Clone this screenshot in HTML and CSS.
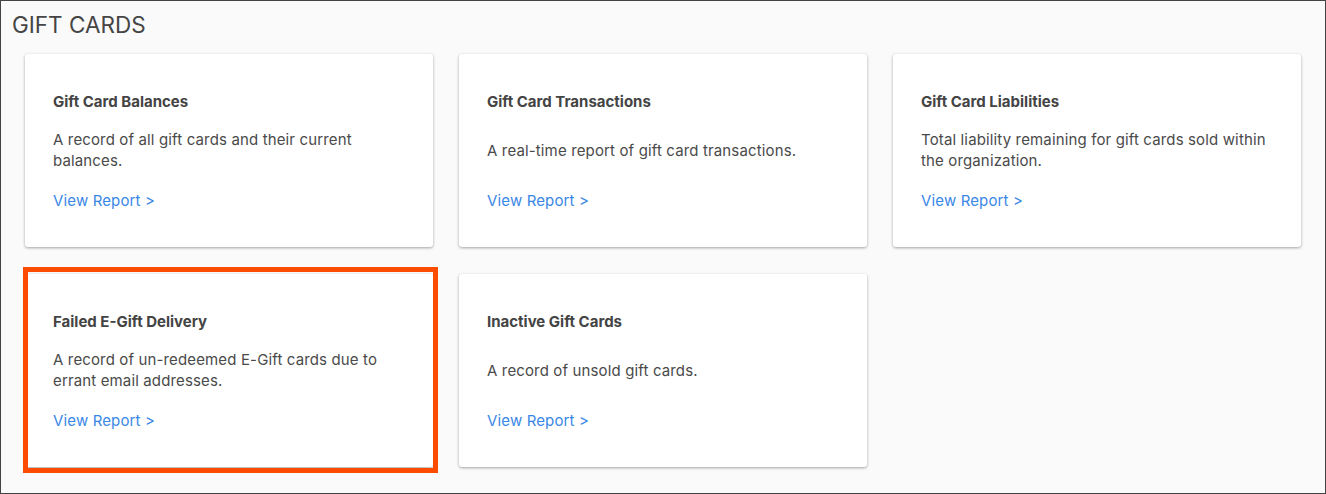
FILE: index.html
```html
<!DOCTYPE html>
<html>
<head>
<meta charset="utf-8">
<link rel="stylesheet" href="styles.css">
</head>
<body>
<div class="frame">
  <h1 class="page-title">GIFT CARDS</h1>
  <div class="grid">
    <div class="card">
      <div class="card-title">Gift Card Balances</div>
      <div class="card-desc"><p>A record of all gift cards and their current balances.</p></div>
      <a class="card-link" href="#">View Report &gt;</a>
    </div>
    <div class="card">
      <div class="card-title">Gift Card Transactions</div>
      <div class="card-desc"><p>A real-time report of gift card transactions.</p></div>
      <a class="card-link" href="#">View Report &gt;</a>
    </div>
    <div class="card">
      <div class="card-title">Gift Card Liabilities</div>
      <div class="card-desc"><p>Total liability remaining for gift cards sold within the organization.</p></div>
      <a class="card-link" href="#">View Report &gt;</a>
    </div>
    <div class="card highlighted">
      <div class="card-title">Failed E-Gift Delivery</div>
      <div class="card-desc"><p>A record of un-redeemed E-Gift cards due to errant email addresses.</p></div>
      <a class="card-link" href="#">View Report &gt;</a>
      <div class="highlight-box"></div>
    </div>
    <div class="card">
      <div class="card-title">Inactive Gift Cards</div>
      <div class="card-desc"><p>A record of unsold gift cards.</p></div>
      <a class="card-link" href="#">View Report &gt;</a>
    </div>
  </div>
</div>
</body>
</html>
```

FILE: styles.css
```css
html, body {
  margin: 0;
  padding: 0;
}
body {
  font-family: "Inter", "Noto Sans", sans-serif;
  color: #4a4a4a;
}
.frame {
  width: 1326px;
  height: 494px;
  box-sizing: border-box;
  border: 1px solid #444;
  background: #fafafa;
}
.page-title {
  margin: 0;
  padding: 10px 11px 0;
  font-size: 22.5px;
  line-height: 28px;
  font-weight: 400;
  color: #454545;
}
.grid {
  display: grid;
  grid-template-columns: repeat(3, 408px);
  column-gap: 26px;
  row-gap: 27px;
  padding: 15px 24px 0;
}
.card {
  position: relative;
  height: 193px;
  box-sizing: border-box;
  padding: 37px 28px 36px;
  background: #fff;
  border-radius: 3px;
  box-shadow: 0 1px 3px rgba(0, 0, 0, 0.35);
  display: flex;
  flex-direction: column;
}
.card-title {
  font-size: 15px;
  line-height: 21px;
  font-weight: 700;
  color: #444;
}
.card-desc {
  flex: 1;
  display: flex;
  align-items: center;
  padding-bottom: 2px;
}
.card-desc p {
  margin: 0;
  font-size: 15px;
  line-height: 21px;
  letter-spacing: 0.14px;
  color: #4a4a4a;
}
.card-link {
  font-size: 15px;
  line-height: 21px;
  letter-spacing: 0.14px;
  color: #3a87e6;
  text-decoration: none;
}
.highlight-box {
  position: absolute;
  left: -2px;
  top: -7px;
  width: 415px;
  height: 206px;
  box-sizing: border-box;
  border: 5px solid #fc4c02;
  pointer-events: none;
}
```
